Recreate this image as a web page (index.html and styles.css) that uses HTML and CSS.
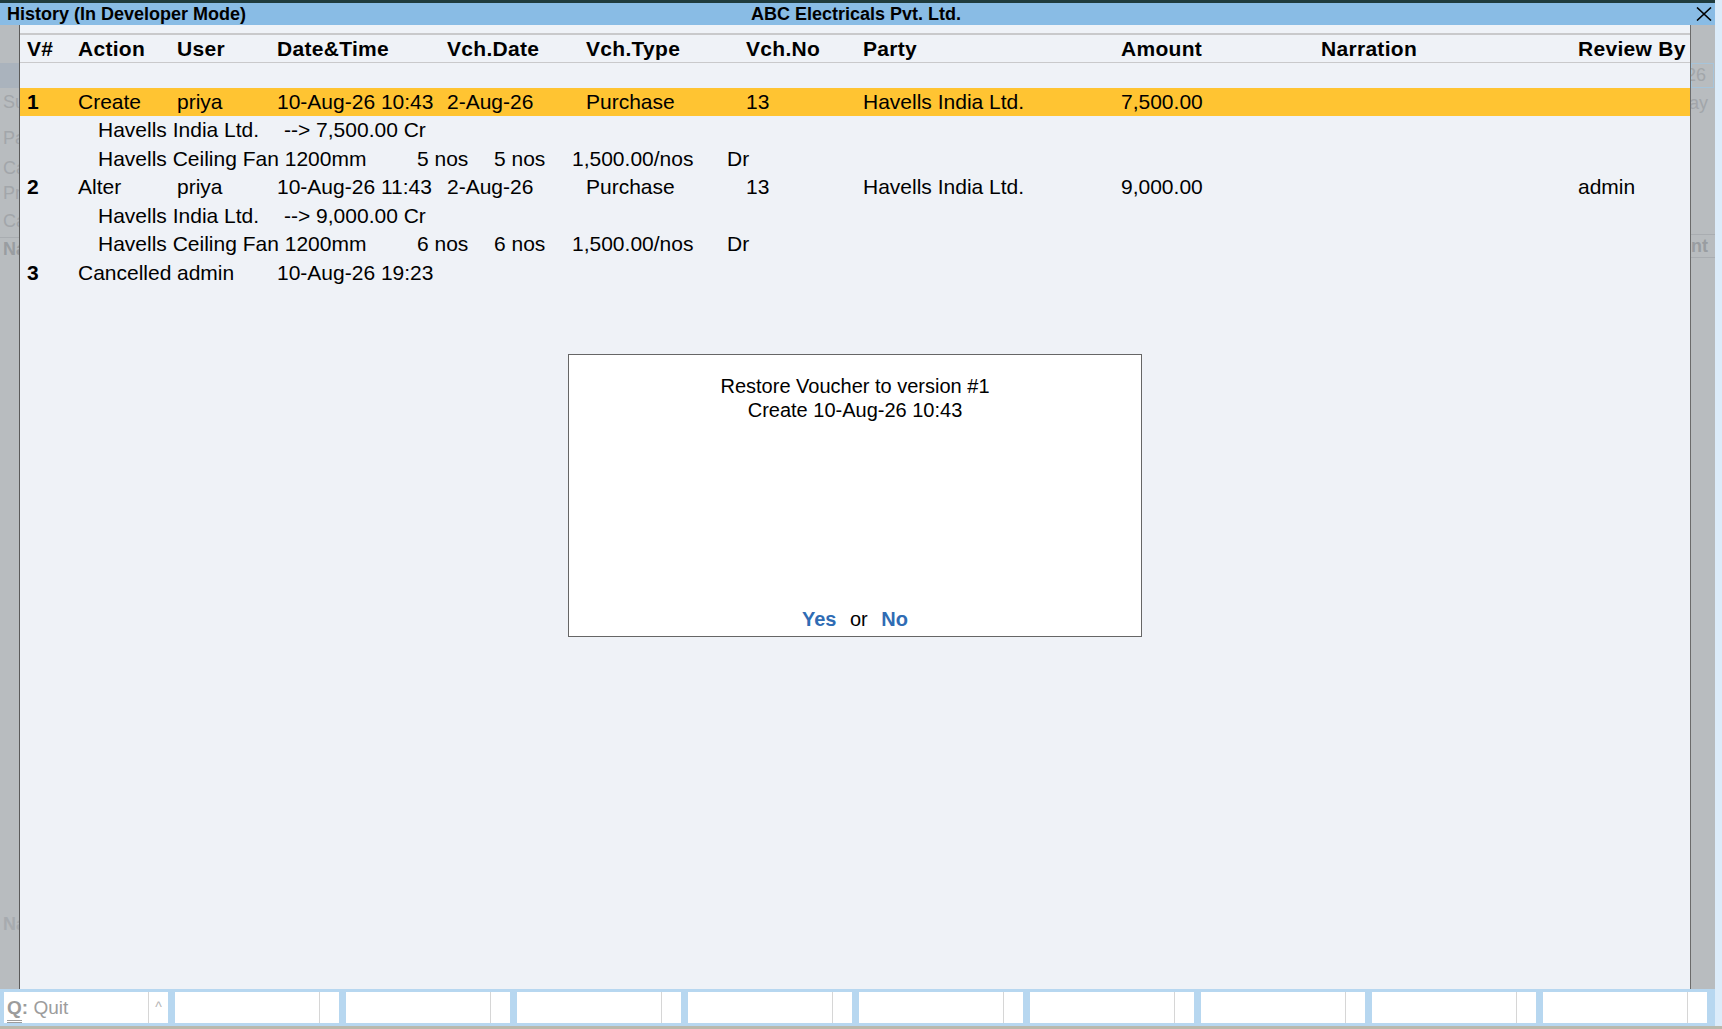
FILE: index.html
```html
<!DOCTYPE html>
<html lang="en">
  <head>
    <meta charset="UTF-8" />
    <title>History (In Developer Mode)</title>
    <link rel="stylesheet" href="styles.css">
  </head>
  <body>
    <div class="window">
      <div class="topline"></div>
      <div class="titlebar">
        <span class="title">History (In Developer Mode)</span>
        <span class="company">ABC Electricals Pvt. Ltd.</span>
        <span class="close">
          <svg width="16" height="14" viewBox="0 0 16 14">
            <path d="M1 0.5 L15 13.5 M15 0.5 L1 13.5" stroke="#000" stroke-width="1.6" fill="none" />
          </svg>
        </span>
      </div>

      <div class="workspace">
        <div class="side side-left">
          <div class="ghost-band"></div>
          <div class="ghost g-su">Su</div>
          <div class="ghost g-pa">Pa</div>
          <div class="ghost g-c1">Ca</div>
          <div class="ghost g-pr">Pr</div>
          <div class="ghost g-c2">Ca</div>
          <div class="ghost ghost-head g-na">Na</div>
          <div class="ghost g-na2">Na</div>
        </div>

        <div class="main">
          <div class="row head">
            <span>V#</span>
            <span>Action</span>
            <span>User</span>
            <span>Date&amp;Time</span>
            <span>Vch.Date</span>
            <span>Vch.Type</span>
            <span>Vch.No</span>
            <span>Party</span>
            <span>Amount</span>
            <span>Narration</span>
            <span>Review By</span>
          </div>
          <div class="blank"></div>

          <div class="row entry current">
            <span class="num">1</span>
            <span>Create</span>
            <span>priya</span>
            <span>10-Aug-26 10:43</span>
            <span>2-Aug-26</span>
            <span>Purchase</span>
            <span>13</span>
            <span>Havells India Ltd.</span>
            <span>7,500.00</span>
            <span></span>
            <span></span>
          </div>
          <div class="line">
            <span class="ledger">Havells India Ltd.</span>
            <span>--&gt; 7,500.00 Cr</span>
          </div>
          <div class="line">
            <span class="item">Havells Ceiling Fan 1200mm</span>
            <span class="qty">5 nos</span>
            <span class="qty2">5 nos</span>
            <span class="rate">1,500.00/nos</span>
            <span>Dr</span>
          </div>

          <div class="row entry">
            <span class="num">2</span>
            <span>Alter</span>
            <span>priya</span>
            <span>10-Aug-26 11:43</span>
            <span>2-Aug-26</span>
            <span>Purchase</span>
            <span>13</span>
            <span>Havells India Ltd.</span>
            <span>9,000.00</span>
            <span></span>
            <span>admin</span>
          </div>
          <div class="line">
            <span class="ledger">Havells India Ltd.</span>
            <span>--&gt; 9,000.00 Cr</span>
          </div>
          <div class="line">
            <span class="item">Havells Ceiling Fan 1200mm</span>
            <span class="qty">6 nos</span>
            <span class="qty2">6 nos</span>
            <span class="rate">1,500.00/nos</span>
            <span>Dr</span>
          </div>

          <div class="row entry">
            <span class="num">3</span>
            <span>Cancelled</span>
            <span>admin</span>
            <span>10-Aug-26 19:23</span>
          </div>

          <div class="dialog">
            <div class="dialog-text">Restore Voucher to version #1</div>
            <div class="dialog-text">Create 10-Aug-26 10:43</div>
            <div class="dialog-actions">
              <span class="choice">Yes</span>
              <span class="or">or</span>
              <span class="choice">No</span>
            </div>
          </div>
        </div>

        <div class="side side-right">
          <div class="ghost ghost-box">26</div>
          <div class="ghost r-ay">ay</div>
          <div class="ghost ghost-head r-nt">nt</div>
        </div>
      </div>

      <div class="buttonbar">
        <div class="key">
          <span class="key-label"><b class="hotkey">Q</b><b>:</b> Quit</span>
          <span class="key-more">^</span>
        </div>
        <div class="key"><span class="key-label"></span><span class="key-more"></span></div>
        <div class="key"><span class="key-label"></span><span class="key-more"></span></div>
        <div class="key"><span class="key-label"></span><span class="key-more"></span></div>
        <div class="key"><span class="key-label"></span><span class="key-more"></span></div>
        <div class="key"><span class="key-label"></span><span class="key-more"></span></div>
        <div class="key"><span class="key-label"></span><span class="key-more"></span></div>
        <div class="key"><span class="key-label"></span><span class="key-more"></span></div>
        <div class="key"><span class="key-label"></span><span class="key-more"></span></div>
        <div class="key"><span class="key-label"></span><span class="key-more"></span></div>
      </div>
      <div class="baseline"></div>
    </div>
  </body>
</html>
```

FILE: styles.css
```css
body {
  margin: 0;
  width: 1722px;
  height: 1029px;
  overflow: hidden;
  background-color: #dcecfa;
  font-family: "Liberation Sans", Arial, sans-serif;
  color: #000;
}

.window {
  width: 1715px;
  display: flex;
  flex-direction: column;
}

.topline {
  height: 3px;
  background-color: #1f3b3d;
}

.titlebar {
  height: 22px;
  display: grid;
  grid-template-columns: 1fr auto 1fr;
  align-items: center;
  padding-right: 3px;
  background-color: #89bce5;
  font-size: 18px;
  font-weight: bold;
}

.title {
  margin-left: 7px;
}

.close {
  justify-self: end;
  display: flex;
}

.workspace {
  height: 964px;
  display: flex;
}

.side {
  background-color: #b8bcbf;
  overflow: hidden;
  font-size: 18px;
  color: #a2a6aa;
  white-space: nowrap;
}

.side-left {
  width: 19px;
  padding-top: 38px;
  padding-left: 3px;
  box-sizing: border-box;
}

.side-right {
  width: 24px;
  padding-top: 38px;
}

.ghost {
  height: 24px;
  line-height: 24px;
}

.ghost-band {
  height: 25px;
  margin-left: -3px;
  background-color: #aab3bd;
}

.ghost-head {
  font-weight: bold;
  color: #999da1;
  height: 22px;
  line-height: 22px;
  border-top: 1px solid #a9adb1;
}

.g-su { margin-top: 2px; }
.g-pa { margin-top: 12px; }
.g-c1 { margin-top: 6px; }
.g-pr { margin-top: 1px; }
.g-c2 { margin-top: 4px; }
.g-na { margin-top: 4px; margin-left: -3px; padding-left: 3px; }
.g-na2 { margin-top: 652px; font-weight: bold; color: #a7abaf; }

.side-right .ghost {
  display: flex;
  justify-content: flex-end;
  padding-right: 7px;
}

.ghost-box {
  height: 23px;
  line-height: 23px;
  margin-right: 1px;
  border: 1px solid #a6c4da;
}

.r-ay { margin-top: 3px; }

.r-nt {
  margin-top: 119px;
  border-bottom: 1px solid #a9adb1;
}

.main {
  flex: 1;
  position: relative;
  padding-top: 8px;
  background-color: #eff2f7;
  border-left: 1px solid #5b5b5b;
  border-right: 1px solid #6b6b6b;
  font-size: 21px;
}

.row {
  display: grid;
  grid-template-columns: 51px 99px 100px 170px 139px 160px 117px 258px 200px 257px 1fr;
  align-items: center;
  height: 28.5px;
  padding-left: 7px;
  white-space: nowrap;
}

.head {
  height: 27px;
  font-weight: bold;
  letter-spacing: 0.3px;
  border-top: 2px solid #c9c9cb;
  border-bottom: 1px solid #c9c9cb;
}

.blank {
  height: 24.5px;
}

.entry .num {
  font-weight: bold;
}

.current {
  background-color: #ffc432;
}

.line {
  display: flex;
  align-items: center;
  height: 28.5px;
  padding-left: 78px;
  white-space: nowrap;
}

.ledger { width: 186px; }
.item { width: 319px; }
.qty { width: 77px; }
.qty2 { width: 78px; }
.rate { width: 155px; }

.dialog {
  position: absolute;
  left: 548px;
  top: 329px;
  width: 574px;
  height: 283px;
  box-sizing: border-box;
  display: flex;
  flex-direction: column;
  align-items: center;
  padding: 19px 0 5px;
  background-color: #fff;
  border: 1px solid #666;
  font-size: 20px;
}

.dialog-text {
  line-height: 24px;
}

.dialog-actions {
  margin-top: auto;
  line-height: 24px;
}

.choice {
  color: #2f6cb4;
  font-weight: bold;
}

.or {
  margin: 0 8px;
}

.buttonbar {
  display: flex;
  gap: 7px;
  padding: 3px 8px 3px 4px;
  background-color: #b7d7f0;
}

.key {
  width: 164px;
  height: 31px;
  display: flex;
  background-color: #fff;
}

.key-label {
  width: 145px;
  border-right: 1px solid #d6d6d6;
  padding-left: 3px;
  box-sizing: border-box;
  font-size: 19px;
  line-height: 31px;
  color: #9c9c9c;
  white-space: nowrap;
}

.hotkey {
  display: inline-block;
  line-height: 24px;
  border-bottom: 3px double #9c9c9c;
}

.key-more {
  flex: 1;
  text-align: center;
  font-size: 14px;
  line-height: 31px;
  color: #b5b5b5;
}

.baseline {
  width: 1722px;
  height: 3px;
  background-color: #b9b9ad;
}
```
